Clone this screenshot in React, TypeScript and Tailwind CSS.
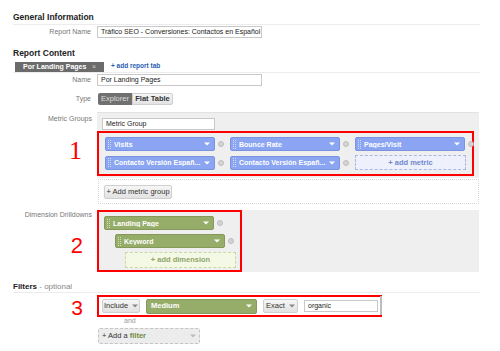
import React from 'react'

const FONT = { fontFamily: '"Liberation Sans", Arial, sans-serif' }

const Caret = ({ className = 'fill-white' }: { className?: string }) => (
  <svg width="6" height="4" viewBox="0 0 6 4" className={`shrink-0 ${className}`}>
    <path d="M0 0.5h6L3 3.5z" />
  </svg>
)

const Grip = () => (
  <svg width="4" height="9" viewBox="0 0 4 9" className="fill-white/60 shrink-0">
    {[0, 2, 4, 6, 8].map((y) => (
      <React.Fragment key={y}>
        <rect x="0" y={y} width="1" height="1" />
        <rect x="2" y={y} width="1" height="1" />
      </React.Fragment>
    ))}
  </svg>
)

const Remove = () => (
  <span className="w-[6px] h-[6px] rounded-full bg-[#d4d4d4] border border-[#bdbdbd] shrink-0" />
)

function Chip({ label, color }: { label: string; color: 'blue' | 'green' }) {
  const bg =
    color === 'blue'
      ? 'bg-[#8ba5f2] border-[#7a94e0]'
      : 'bg-[#96ad6a] border-[#84995a]'
  return (
    <div className="flex items-center gap-[3px]">
      <div
        className={`w-[110px] h-[14px] rounded-[2px] border ${bg} flex items-center pl-[2px] pr-[4px] gap-[2px]`}
      >
        <Grip />
        <span className="flex-1 text-white font-bold text-[7px] leading-none whitespace-nowrap overflow-hidden">
          {label}
        </span>
        <Caret />
      </div>
      <Remove />
    </div>
  )
}

const Label = ({ children }: { children: React.ReactNode }) => (
  <div className="w-[92px] shrink-0 text-right text-[7px] text-[#777] pr-[1px]">{children}</div>
)

const TextInput = ({ value, w = 'w-[165px]' }: { value: string; w?: string }) => (
  <div
    className={`${w} h-[12px] border border-[#c8c8c8] bg-white flex items-center px-[3px] text-[7px] text-[#222] whitespace-nowrap overflow-hidden`}
  >
    {value}
  </div>
)

const GrayBtn = ({ children, className = '' }: { children: React.ReactNode; className?: string }) => (
  <div
    className={`h-[14px] rounded-[2px] border border-[#cfcfcf] bg-gradient-to-b from-[#f6f6f6] to-[#e2e2e2] flex items-center text-[7.5px] text-[#333] ${className}`}
  >
    {children}
  </div>
)

export default function App() {
  return (
    <div className="w-[500px] h-[351px] bg-white overflow-hidden" style={FONT}>
      {/* General Information */}
      <div className="pt-[12px] pl-[13px] h-[24px] text-[8.5px] font-bold text-[#222] leading-[10px]">
        General Information
      </div>
      <div className="ml-[13px] w-[467px] border-t border-[#ececec]" />
      <div className="flex items-center gap-[5px] h-[14px]">
        <Label>Report Name</Label>
        <TextInput value="Tráfico SEO - Conversiones: Contactos en Español" />
      </div>

      {/* Report Content */}
      <div className="pt-[9px] pl-[13px] h-[23px] text-[8.5px] font-bold text-[#222] leading-[10px]">
        Report Content
      </div>
      <div className="flex items-end h-[10px]">
        <div className="ml-[15px] w-[89px] h-[10px] bg-[#6b6b6b] flex items-center justify-between px-[8px] text-[7px]">
          <span className="text-white font-bold">Por Landing Pages</span>
          <span className="text-[#ccc] text-[7px]">×</span>
        </div>
        <div className="ml-[7px] pb-[1px] text-[6.5px] font-bold text-[#2a5db0]">+ add report tab</div>
      </div>
      <div className="ml-[13px] w-[467px] border-t border-[#ececec]" />
      <div className="flex items-center gap-[5px] h-[14px]">
        <Label>Name</Label>
        <TextInput value="Por Landing Pages" />
      </div>

      {/* Type */}
      <div className="flex items-center gap-[6px] h-[12px] mt-[6px]">
        <Label>Type</Label>
        <div className="flex text-[7.5px]">
          <div className="w-[34px] h-[12px] rounded-l-[2px] bg-[#707070] text-[#ddd] flex items-center justify-center">
            Explorer
          </div>
          <div className="w-[41px] h-[12px] rounded-r-[2px] border border-[#cfcfcf] bg-gradient-to-b from-[#f6f6f6] to-[#e2e2e2] text-[#333] font-bold flex items-center justify-center">
            Flat Table
          </div>
        </div>
      </div>

      {/* Metric Groups */}
      <div className="flex gap-[6px] mt-[7px]">
        <div className="w-[92px] shrink-0 flex flex-col items-end">
          <div className="text-[7px] text-[#777] mt-[2px]">Metric Groups</div>
          <div
            className="mt-[13px] mr-[10px] text-[red] text-[26px] leading-none"
            style={{ fontFamily: '"Liberation Serif", serif' }}
          >
            1
          </div>
        </div>
        <div className="-ml-[1px] flex flex-col">
          <div className="w-[382px] bg-[#efefef] border-t border-[#e2e2e2] pt-[5px] pb-[2px]">
            <div className="ml-[5px]">
              <TextInput value="Metric Group" w="w-[113px]" />
            </div>
            <div className="w-[377px] h-[45px] mt-[1px] border-2 border-[red] flex flex-col justify-center gap-[4px] pl-[6px]">
              <div className="flex gap-[6px]">
                <Chip label="Visits" color="blue" />
                <Chip label="Bounce Rate" color="blue" />
                <Chip label="Pages/Visit" color="blue" />
              </div>
              <div className="flex gap-[6px]">
                <Chip label="Contacto Versión Españ..." color="blue" />
                <Chip label="Contacto Versión Españ..." color="blue" />
                <div className="w-[111px] h-[15px] border border-dashed border-[#aab8e6] bg-[#eef1fb] flex items-center justify-center text-[7.5px] font-bold text-[#7088cc]">
                  + add metric
                </div>
              </div>
            </div>
          </div>
          <div className="ml-[1px] w-[381px] h-[25px] mt-[1px] border border-dotted border-[#d6d6d6] flex items-center pl-[5px]">
            <GrayBtn className="w-[68px] justify-center">+ Add metric group</GrayBtn>
          </div>
        </div>
      </div>

      {/* Dimension Drilldowns */}
      <div className="flex gap-[6px] mt-[6px]">
        <div className="w-[92px] shrink-0 flex flex-col items-end">
          <div className="text-[7px] text-[#777]">Dimension Drilldowns</div>
          <div className="mt-[14px] mr-[9px] text-[red] text-[22px] leading-none">2</div>
        </div>
        <div className="w-[382px] h-[62px] bg-[#efefef] -ml-[1px]">
          <div className="w-[145px] h-[62px] border-2 border-[red] flex flex-col pt-[4px] pl-[5px] gap-[4px]">
            <Chip label="Landing Page" color="green" />
            <div className="ml-[11px]">
              <Chip label="Keyword" color="green" />
            </div>
            <div className="ml-[21px] w-[111px] h-[16px] border border-dashed border-[#c9d9a3] bg-[#f4f9e6] flex items-center justify-center text-[7.5px] font-bold text-[#8fa566]">
              + add dimension
            </div>
          </div>
        </div>
      </div>

      {/* Filters */}
      <div className="pt-[10px] pl-[13px] h-[20px] text-[8px] leading-[10px] text-[#222]">
        <span className="font-bold">Filters</span>
        <span className="text-[#888]"> - optional</span>
      </div>
      <div className="ml-[13px] w-[467px] border-t border-[#ececec]" />
      <div className="flex gap-[5px] mt-[1px]">
        <div className="w-[92px] shrink-0 flex justify-end">
          <div className="mr-[9px] mt-[3px] text-[red] text-[21px] leading-none">3</div>
        </div>
        <div className="flex flex-col">
          <div className="flex items-center">
            <div className="w-[285px] h-[22px] border-2 border-[red] flex items-center pl-[3px] gap-[6px]">
              <GrayBtn className="w-[38px] justify-center gap-[4px]">
                Include <Caret className="fill-[#888]" />
              </GrayBtn>
              <div className="w-[111px] h-[15px] rounded-[2px] bg-[#96ad6a] border border-[#84995a] flex items-center justify-between px-[4px]">
                <span className="text-white font-bold text-[7.5px]">Medium</span>
                <Caret />
              </div>
              <GrayBtn className="w-[35px] justify-center gap-[4px]">
                Exact <Caret className="fill-[#888]" />
              </GrayBtn>
              <TextInput value="organic" w="w-[74px]" />
            </div>
            <div className="-ml-[2px]">
              <Remove />
            </div>
          </div>
          <div className="ml-[27px] text-[7px] text-[#999] leading-[8px] mt-[-1px]">and</div>
          <div className="ml-[1px] mt-[3px] w-[102px] h-[16px] rounded-[2px] border border-dashed border-[#c4c4c4] bg-[#ececec] flex items-center justify-between px-[3px] text-[7.5px]">
            <span className="text-[#333]">
              + Add a <span className="text-[#6f8a44] font-bold">filter</span>
            </span>
            <Caret className="fill-[#bbb]" />
          </div>
        </div>
      </div>
    </div>
  )
}
